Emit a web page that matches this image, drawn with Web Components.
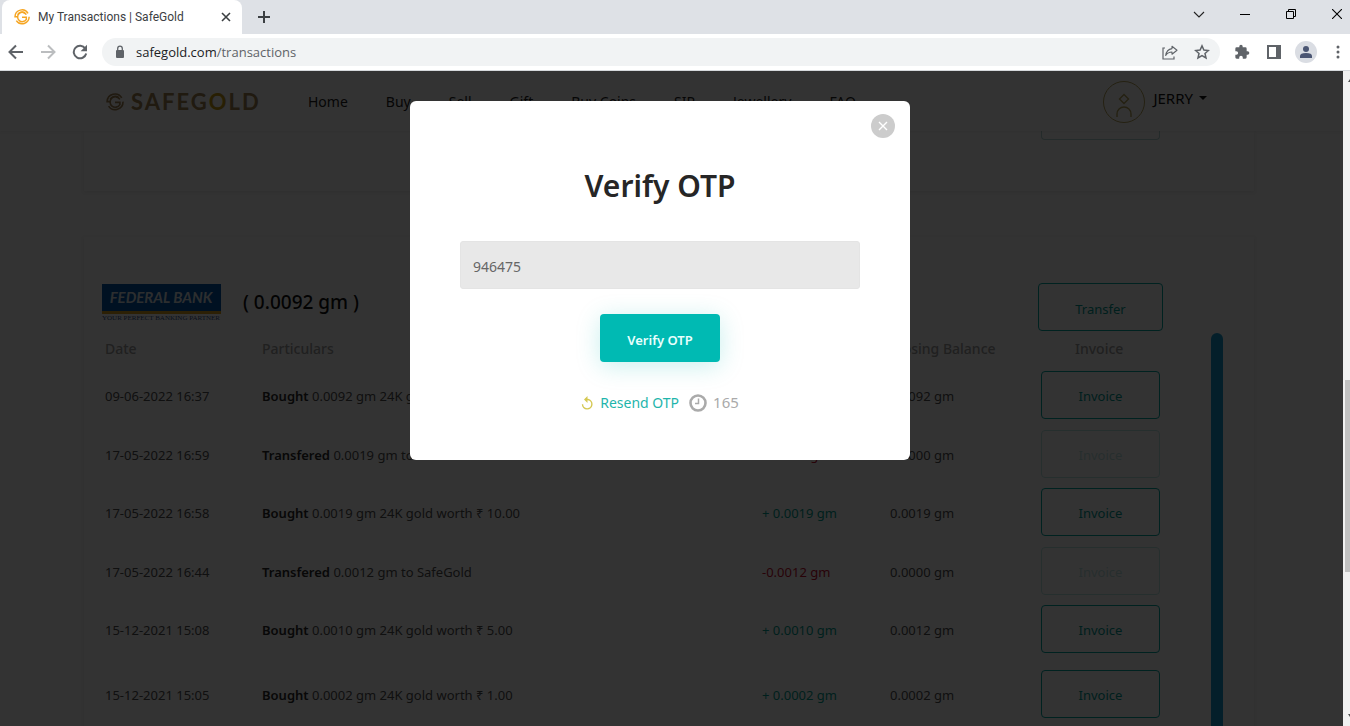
<!DOCTYPE html>
<html lang="en">
<head>
<meta charset="utf-8">
<title>My Transactions | SafeGold</title>
<style>
html,body{margin:0;height:100%}
body{font-family:"Noto Sans","Liberation Sans",sans-serif;background:#fff;overflow:hidden}
</style>
</head>
<body>
<browser-window>
  <browser-tabs slot="chrome"></browser-tabs>
  <browser-toolbar slot="chrome"></browser-toolbar>
  <site-page>
    <site-header></site-header>
    <summary-card></summary-card>
    <holdings-card></holdings-card>
    <otp-dialog slot="dialog"></otp-dialog>
  </site-page>
  <page-scrollbar></page-scrollbar>
</browser-window>

<script>
function define(name, markup, setup){
  const t=document.createElement('template');
  t.innerHTML=markup;
  customElements.define(name,class extends HTMLElement{
    constructor(){
      super();
      this.attachShadow({mode:'open'}).append(t.content.cloneNode(true));
      if(setup) setup(this.shadowRoot,this);
    }
  });
}

const swirl=`<g fill="none" stroke="currentColor" stroke-width="2.200"><path d="M21 6.500A10.500 10.500 0 0 0 1.500 11.500H6"/><path d="M18.500 8.500A7 7 0 1 0 18.500 15.500V12.500H12"/><path d="M3.500 17.500A10.500 10.500 0 0 0 22.700 11.500"/><path d="M16.500 5.500A8 8 0 0 0 5.500 8.500"/></g>`;

define('browser-window',`
<style>
:host{display:flex;flex-direction:column;height:100vh}
.view{display:flex;flex:1;min-height:0;border-top:1px solid #d5d8db;box-sizing:border-box}
</style>
<slot name="chrome"></slot>
<div class="view"><slot></slot></div>`);

define('browser-tabs',`
<style>
:host{display:flex;background:#dee1e6;height:34px}
.tab{display:flex;align-items:center;width:240px;box-sizing:border-box;margin-left:2px;padding:0 10px 0 12px;gap:8px;background:#fff;border-radius:8px 8px 0 0;font:12px/16px Roboto,"Noto Sans",sans-serif;color:#3c4043}
.tab span{flex:1;white-space:nowrap}
.logo{color:#f6a623;display:block}
button{border:0;padding:0;background:none;display:flex;align-items:center;justify-content:center;color:#202124}
.new{width:28px;margin-left:8px}
.win{margin-left:auto;display:flex}
.win button{width:46px;height:28px}
.win .last{width:36px;padding-left:10px}
</style>
<div class="tab">
 <svg class="logo" width="16" height="16" viewBox="0 0 24 24">${swirl}</svg>
 <span>My Transactions | SafeGold</span>
 <button aria-label="Close tab"><svg width="12" height="12" viewBox="0 0 12 12"><path d="M2 2l8 8M10 2l-8 8" stroke="#3c4043" stroke-width="1.600"/></svg></button>
</div>
<button class="new" aria-label="New tab"><svg width="14" height="14" viewBox="0 0 14 14"><path d="M7 1v12M1 7h12" stroke="#3c4043" stroke-width="2"/></svg></button>
<div class="win">
 <button aria-label="Search tabs"><svg width="12" height="12" viewBox="0 0 12 12"><path d="M1 4l5 5 5-5" fill="none" stroke="#222" stroke-width="1.100"/></svg></button>
 <button aria-label="Minimize"><svg width="10" height="10" viewBox="0 0 10 10"><path d="M0 5.500h10" stroke="#000"/></svg></button>
 <button aria-label="Restore"><svg width="10" height="10" viewBox="0 0 10 10"><path d="M.5 2.500h7v7h-7zM2.500 2V.5h7v7H8" fill="none" stroke="#000"/></svg></button>
 <button class="last" aria-label="Close"><svg width="10" height="10" viewBox="0 0 10 10"><path d="M0 0l10 10M10 0L0 10" stroke="#000" stroke-width="1.100"/></svg></button>
</div>`);

define('browser-toolbar',`
<style>
:host{display:flex;align-items:center;height:36px;background:#fff;padding:0 4px 0 8px;color:#5f6368;font-family:"Open Sans","Noto Sans",sans-serif}
button{border:0;padding:0;background:none;display:flex;align-items:center;justify-content:center;width:16px;height:28px;color:inherit}
.nav{display:flex;gap:16px;margin-right:14px}
.off{color:#bbbdbf}
.url{display:flex;flex:1;align-items:center;height:28px;border-radius:14px;background:#f1f3f4;padding:0 10px 0 12px;gap:10px}
a{flex:1;color:#5f6368;text-decoration:none;font-size:13px;line-height:20px}
a b{font-weight:400;color:#202124}
.acts{display:flex;gap:16px}
.tools{display:flex;gap:16px;margin-left:14px;align-items:center}
.tools .avatar{width:22px;height:22px;border-radius:50%;background:#dadde3;margin:0 -3px;color:#4b5673}
svg{display:block}
</style>
<div class="nav">
<button aria-label="Back"><svg width="16" height="16" viewBox="0 0 16 16"><path d="M15 8H2M8 1.500L1.500 8 8 14.500" fill="none" stroke="currentColor" stroke-width="2"/></svg></button>
<button class="off" aria-label="Forward"><svg width="16" height="16" viewBox="0 0 16 16"><path d="M1 8h13M8 1.500L14.500 8 8 14.500" fill="none" stroke="currentColor" stroke-width="2"/></svg></button>
<button aria-label="Reload"><svg width="16" height="16" viewBox="0 0 16 16"><path d="M13.300 4.500A6.300 6.300 0 1 0 14.200 9.500" fill="none" stroke="currentColor" stroke-width="2"/><path d="M15 .8v6.400H8.600z" fill="currentColor"/></svg></button>
</div>
<div class="url">
<svg width="12" height="14" viewBox="0 0 12 14"><rect x="2" y="5" width="8" height="8" rx="1" fill="currentColor"/><path d="M3.700 5.500V3.500a2.300 2.300 0 0 1 4.600 0v2" fill="none" stroke="currentColor" stroke-width="1.300"/></svg>
<a href="#"><b>safegold.com</b>/transactions</a>
<div class="acts">
<button aria-label="Share"><svg width="16" height="16" viewBox="0 0 16 16"><path d="M3 4H1v11h11v-2.500" fill="none" stroke="currentColor" stroke-width="1.200"/><path d="M10 2.200l5 4-5 4V8Q6 8 3.700 11.500 4.500 5.500 10 4.600z" fill="none" stroke="currentColor" stroke-width="1.100" stroke-linejoin="round"/></svg></button>
<button aria-label="Bookmark"><svg width="16" height="16" viewBox="0 0 16 16"><path d="M8 1.900l1.900 4.200 4.500.4-3.400 3 1 4.500L8 11.600 4 14l1-4.500-3.400-3 4.500-.4z" fill="none" stroke="currentColor" stroke-width="1.500"/></svg></button>
</div></div>
<div class="tools">
<button aria-label="Extensions"><svg width="16" height="16" viewBox="0 0 24 24"><path fill="currentColor" d="M20.500 11H19V7a2 2 0 0 0-2-2h-4V3.500a2.500 2.500 0 0 0-5 0V5H4a2 2 0 0 0-2 2v3.800h1.500a2.700 2.700 0 0 1 0 5.400H2V20a2 2 0 0 0 2 2h3.800v-1.500a2.700 2.700 0 0 1 5.400 0V22H17a2 2 0 0 0 2-2v-4h1.500a2.500 2.500 0 0 0 0-5z"/></svg></button>
<button aria-label="Side panel"><svg width="14" height="14" viewBox="0 0 14 14"><path fill="currentColor" fill-rule="evenodd" d="M0 0h14v14H0zM2 2v10h7V2z"/></svg></button>
<button class="avatar" aria-label="Profile"><svg width="14" height="14" viewBox="0 0 14 14"><circle cx="7" cy="4" r="3" fill="currentColor"/><path d="M1 13v-2q0-3 6-3t6 3v2z" fill="currentColor"/></svg></button>
<button aria-label="Menu"><svg width="4" height="14" viewBox="0 0 4 14"><g fill="currentColor"><circle cx="2" cy="2" r="1.500"/><circle cx="2" cy="7" r="1.500"/><circle cx="2" cy="12" r="1.500"/></g></svg></button>
</div>`);

define('page-scrollbar',`
<style>
:host{display:grid;grid-template-rows:309fr 192fr 154fr;justify-items:end;width:7px;background:#f1f1f1;overflow:hidden}
.thumb{width:5px;background:#c1c1c1}
svg{display:block;margin:8px 0}
.down{align-self:end}
</style>
<svg width="2" height="4" viewBox="0 0 2 4"><path d="M2 0v3H0z" fill="#505050"/></svg>
<div class="thumb"></div>
<svg class="down" width="2" height="4" viewBox="0 0 2 4"><path d="M0 0h2v3z" fill="#505050"/></svg>`);

define('site-page',`
<style>
:host{display:block;position:relative;flex:1;min-width:0;overflow:hidden;background:#fcfcfc}
.shade{position:absolute;inset:0;background:rgba(0,0,0,.8);display:flex;justify-content:center;align-items:flex-start;padding:30px 23px 0 0}
</style>
<slot></slot>
<div class="shade"><slot name="dialog"></slot></div>`);

define('site-header',`
<style>
:host{display:flex;align-items:center;height:60px;box-sizing:border-box;padding:2px 0 0 106px;background:#fff;box-shadow:0 1px 3px rgba(0,0,0,.06);position:relative;color:#222}
.brand{display:flex;align-items:center;gap:7px;color:#a08050;width:202px;font:700 22px/26px Lato,sans-serif;text-decoration:none;letter-spacing:2px}
.brand i{font-style:normal;color:#c69b10}
nav{display:flex;gap:38px;flex:1}
nav a{color:#222;text-decoration:none;font-size:14px;line-height:20px}
.user{display:flex;gap:8px;align-items:center;margin-right:136px}
.user button{border:0;background:none;padding:0 0 8px;font:15px/20px "Noto Sans",sans-serif;color:#111;display:flex;align-items:center;gap:6px}
</style>
<a class="brand" href="#"><svg width="18" height="18" viewBox="0 0 24 24">${swirl}</svg><span>SAFEG<i>O</i>LD</span></a>
<nav><a href="#">Home</a><a href="#">Buy</a><a href="#">Sell</a><a href="#">Gift</a><a href="#">Buy Coins</a><a href="#">SIP</a><a href="#">Jewellery</a><a href="#">FAQ</a></nav>
<div class="user">
<svg width="42" height="42" viewBox="0 0 42 42" fill="none" stroke="#b5a258"><circle cx="21" cy="21" r="20.500"/><path d="M21 13.500l4.500 4.500-4.500 4.500-4.500-4.500z" stroke-width="1.400"/><path d="M14 36v-3a7 7 0 0 1 14 0v3" stroke-width="1.400"/></svg>
<button>JERRY <svg width="8" height="4" viewBox="0 0 8 4"><path d="M0 0h8L4 4z" fill="#111"/></svg></button>
</div>`);

define('summary-card',`
<style>
:host{display:flex;justify-content:flex-end;align-items:flex-start;height:60px;margin:0 89px 0 84px;background:#fff;box-shadow:0 1px 4px rgba(0,0,0,.08)}
div{width:117px;height:8px;margin-right:94px;border:1px solid #b4d6d4;border-top:0;border-radius:0 0 4px 4px}
</style><div></div>`);

define('outline-button',`
<style>
:host{display:block;width:119px}
:host([wide]){width:125px}
button{width:100%;height:48px;box-sizing:border-box;padding:2px 0 0;border:1px solid #00a8a0;border-radius:4px;background:#fff;color:#009a93;font:13px/20px "Noto Sans",sans-serif}
:host([wide]) button{padding-top:4px}
:host([faded]) button{opacity:.25}
</style><button><slot></slot></button>`);

define('holdings-card',`
<style>
:host{display:block;margin:46px 89px 0 84px;padding:46px 31px 40px 18px;background:#fff;box-shadow:0 1px 4px rgba(0,0,0,.08);color:#333}
.head{display:flex;align-items:flex-start;height:50px}
.bank{width:119px;margin:1px 22px 0 0}
.bank svg{display:block}
h2{margin:8px 0 0;font-size:19px;line-height:22px;font-weight:500;color:#111;flex:1}
.head outline-button{margin-right:60px}
.body{display:flex}
table{border-collapse:collapse;table-layout:fixed;flex:1;font-size:13px;line-height:20px;white-space:nowrap}
th{font-weight:500;font-size:14px;text-align:left;color:#a0a0a0;padding:0;height:32px}
th:last-child{padding-left:34px}
td{padding:21px 0 0;height:37px;vertical-align:top;color:#505050}
td:last-child{padding-top:6px;height:52px}
tr:nth-child(odd) td{height:38px}
tr:nth-child(odd) td:last-child{height:53px}
tr:last-child td{padding-top:27px}
tr:last-child td:last-child{padding-top:12px;height:80px}
th:first-child,td:first-child{padding-left:3px}
td b{color:#2a2a2a;font-weight:600}
td.up{color:#00a090}td.down{color:#c8102f}
.bar{width:12px;border-radius:6px;background:#189cd0}
</style>
<div class="head">
 <div class="bank"><svg width="119" height="38" viewBox="0 0 119 38" role="img" aria-label="Federal Bank"><rect width="119" height="27" fill="#0054a8"/><rect y="27" width="119" height="3" fill="#d9a21b"/><text x="59" y="19" text-anchor="middle" font-family="Lato" font-style="italic" font-weight="700" font-size="15" fill="#dde3ea">FEDERAL BANK</text><text x="59" y="36" text-anchor="middle" font-family="Liberation Serif" font-size="7" fill="#34558c">YOUR PERFECT BANKING PARTNER</text></svg></div>
 <h2>( 0.0092 gm )</h2>
 <outline-button wide>Transfer</outline-button>
</div>
<div class="body">
<table>
<colgroup><col style="width:160px"><col style="width:500px"><col style="width:128px"><col style="width:151px"><col></colgroup>
<thead><tr><th>Date</th><th>Particulars</th><th>Amount</th><th>Closing Balance</th><th>Invoice</th></tr></thead>
<tbody></tbody>
</table>
<div class="bar"></div>
</div>`,root=>{
  const rows=[
    ['09-06-2022 16:37','Bought','0.0092 gm 24K gold worth ₹ 50.00','+ 0.0092 gm','0.0092 gm'],
    ['17-05-2022 16:59','Transfered','0.0019 gm to SafeGold','-0.0019 gm','0.0000 gm'],
    ['17-05-2022 16:58','Bought','0.0019 gm 24K gold worth ₹ 10.00','+ 0.0019 gm','0.0019 gm'],
    ['17-05-2022 16:44','Transfered','0.0012 gm to SafeGold','-0.0012 gm','0.0000 gm'],
    ['15-12-2021 15:08','Bought','0.0010 gm 24K gold worth ₹ 5.00','+ 0.0010 gm','0.0012 gm'],
    ['15-12-2021 15:05','Bought','0.0002 gm 24K gold worth ₹ 1.00','+ 0.0002 gm','0.0002 gm']];
  root.querySelector('tbody').innerHTML=rows.map(([d,k,p,a,c])=>`<tr><td>${d}</td><td><b>${k}</b> ${p}</td><td class="${a[0]==='+'?'up':'down'}">${a}</td><td>${c}</td><td><outline-button ${a[0]==='-'?'faded':''}>Invoice</outline-button></td></tr>`).join('');
});

define('otp-dialog',`
<style>
:host{display:block;position:relative;width:500px;box-sizing:border-box;background:#fff;border-radius:6px;padding:66px 50px 46px;text-align:center}
h1{margin:0;font-size:30px;line-height:38px;font-weight:600;color:#262626}
input{display:block;width:100%;height:48px;margin:36px 0 25px;box-sizing:border-box;border:1px solid #e4e4e4;border-radius:3px;background:#e8e8e8;padding:2px 12px 0;font:14px/20px "Noto Sans",sans-serif;color:#666}
.go{width:120px;height:48px;border:0;border-radius:4px;background:#00bab3;color:#e8fffd;font:600 13px/20px "Noto Sans",sans-serif;padding:4px 0 0;box-shadow:0 4px 24px rgba(0,186,179,.22);display:block;margin:0 auto}
.again{display:flex;justify-content:center;align-items:center;gap:6px;margin-top:30px;height:22px;font-size:14px;line-height:22px;color:#aaa}
a{color:#1fb5ac;text-decoration:none;margin-right:4px}
.close{position:absolute;top:13px;right:15px;width:24px;height:24px;border:0;border-radius:50%;background:#ccc;padding:0;display:flex;align-items:center;justify-content:center}
.t{font-size:15px;line-height:20px;padding-bottom:2px}
</style>
<button class="close" aria-label="Close"><svg width="10" height="10" viewBox="0 0 10 10"><path d="M1 1l8 8M9 1L1 9" stroke="#fff" stroke-width="1.400"/></svg></button>
<h1>Verify OTP</h1>
<input type="text" aria-label="OTP" value="946475">
<button class="go">Verify OTP</button>
<div class="again">
<svg width="13" height="14" viewBox="0 0 13 14"><path d="M4 3.500h3a4.700 4.700 0 1 1-5.500 4.700" fill="none" stroke="#d5c852" stroke-width="1.400"/><path d="M6.500 0v7L3 3.500z" fill="#d5c852"/></svg>
<a href="#">Resend OTP</a>
<svg width="18" height="18" viewBox="0 0 18 18"><circle cx="9" cy="9" r="7.500" fill="none" stroke="#aaa" stroke-width="2.600"/><path d="M9.500 4.500v5H6" fill="none" stroke="#aaa" stroke-width="1.500"/></svg>
<span class="t">165</span>
</div>`);
</script>
</body>
</html>
